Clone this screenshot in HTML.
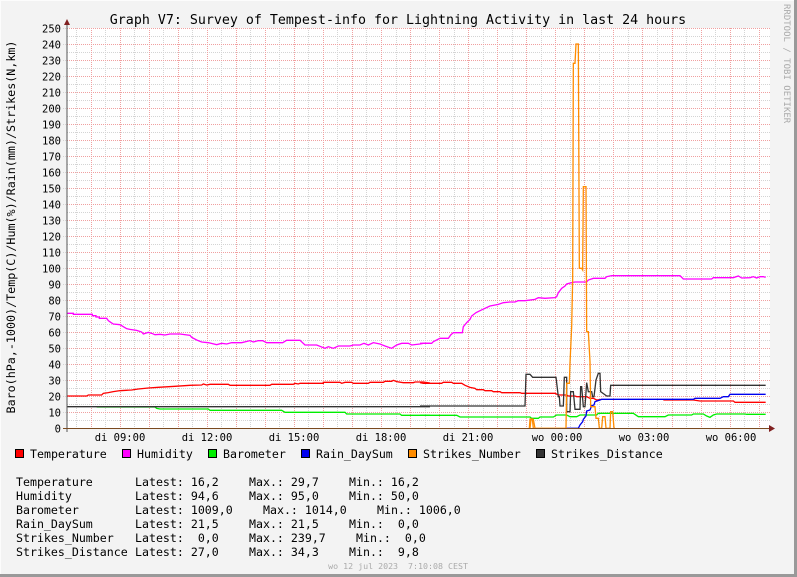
<!DOCTYPE html>
<html><head><meta charset="utf-8"><style>
html,body{margin:0;padding:0;background:#f3f3f3;}
svg{display:block;}
text{font-family:"DejaVu Sans Mono","Liberation Mono",monospace;white-space:pre;}
</style></head><body>
<svg width="797" height="577" viewBox="0 0 797 577" xmlns="http://www.w3.org/2000/svg">
<rect x="0" y="0" width="797" height="577" fill="#f3f3f3"/>
<line x1="0" y1="0.5" x2="797" y2="0.5" stroke="#fcfcfc"/>
<line x1="0.5" y1="0" x2="0.5" y2="577" stroke="#fcfcfc"/>
<line x1="795.5" y1="0" x2="795.5" y2="577" stroke="#999" stroke-width="3"/>
<line x1="0" y1="575.5" x2="797" y2="575.5" stroke="#999" stroke-width="3"/>
<rect x="67" y="28" width="703" height="400" fill="#ffffff"/>
<g id="grid" stroke-width="1" stroke-dasharray="1,1" fill="none">
<g stroke="#d4d4d4" id="minv"></g>
<g stroke="#d4d4d4" id="minh"></g>
<g stroke="#f0a0a0" id="majv"></g>
<g stroke="#f0a0a0" id="majh"></g>
</g>
<g id="ylab" font-size="10.5" fill="#000" text-anchor="end"></g>
<g id="xlab" font-size="10.5" fill="#000" text-anchor="middle">
<text x="120" y="441">di 09:00</text>
<text x="207" y="441">di 12:00</text>
<text x="294" y="441">di 15:00</text>
<text x="381" y="441">di 18:00</text>
<text x="468" y="441">di 21:00</text>
<text x="557" y="441">wo 00:00</text>
<text x="644" y="441">wo 03:00</text>
<text x="731" y="441">wo 06:00</text>
</g>
<text x="398" y="24" font-size="13.3" text-anchor="middle" fill="#000">Graph V7: Survey of Tempest-info for Lightning Activity in last 24 hours</text>
<text transform="translate(15,227) rotate(-90)" font-size="11.7" text-anchor="middle" fill="#000">Baro(hPa,-1000)/Temp(C)/Hum(%)/Rain(mm)/Strikes(N,km)</text>
<text transform="translate(784,4) rotate(90)" font-size="9" fill="#aaa">RRDTOOL / TOBI OETIKER</text>

<g transform="translate(60,300) scale(0.33333)" fill="none" stroke-width="1.3">
<polyline vector-effect="non-scaling-stroke" stroke="#ff00ff" points="20,40 40,40 40,43 97,43 97,47 108,47 108,51 118,51 118,55 140,55 145,62 152,67 160,72 180,74 190,80 200,86 210,88 230,91 245,96 250,102 265,97 275,100 285,104 300,103 315,105 330,102 360,102 390,106 395,112 410,120 425,126 445,128 470,134 485,130 500,132 515,128 545,128 570,122 580,126 595,122 608,122 620,128 635,128 668,128 680,121 720,121 735,135 770,135 795,145 805,140 820,145 835,138 870,138 880,135 900,135 912,130 925,135 940,128 960,132 975,138 995,145 1010,135 1025,130 1045,130 1055,135 1080,132 1090,130 1110,130"/>
<polyline vector-effect="non-scaling-stroke" stroke="#ff0000" points="20,288 80,288 85,285 125,285 130,280 145,278 160,275 180,272 215,270 235,267 265,264 295,262 345,259 390,256 425,255 430,252 440,255 450,253 505,253 510,256 630,256 635,253 700,253 705,250 715,252 720,250 790,250 790,247 840,247 845,250 855,247 875,247 880,250 925,250 930,247 970,247 975,244 995,244 1000,241 1010,245 1030,248 1060,248 1065,246 1090,246 1110,249"/>
<polyline vector-effect="non-scaling-stroke" stroke="#00ee00" points="110,321 285,321 290,325 300,327 445,327 450,331 665,331 675,337 855,337 860,342 1020,342 1025,346 1110,346"/>
<polyline vector-effect="non-scaling-stroke" stroke="#333" points="20,320 1110,320"/>
</g>
<g transform="translate(420,260) scale(0.33333)" fill="none" stroke-width="1.3">
<polyline vector-effect="non-scaling-stroke" stroke="#ff00ff" points="0,250 35,250 40,245 60,235 85,235 92,225 100,218 127,218 130,200 140,188 150,178 155,168 168,158 180,152 195,145 210,138 235,133 250,128 270,126 285,126 295,122 315,122 345,118 355,113 375,115 405,113 410,110 415,98 425,85 435,78 440,72 455,68 465,66 500,66 505,60 520,55 555,55 560,50 575,47 780,47 790,57 875,57 880,53 940,53 955,48 965,54 990,53 1000,50 1010,54 1020,50 1030,50 1037,52"/>
<polyline vector-effect="non-scaling-stroke" stroke="#ff0000" points="0,368 10,370 65,370 70,367 95,367 100,370 125,370 135,376 150,382 165,385 170,389 190,389 195,392 215,392 220,395 240,395 245,398 300,398 305,400 405,400 415,405 440,405 445,408 465,408 470,410 500,410 510,415 520,415 530,420 545,418"/>
<polyline vector-effect="non-scaling-stroke" stroke="#ff0000" points="730,420 820,420 840,423 940,423 945,427 1037,427"/>
<polyline vector-effect="non-scaling-stroke" stroke="#00ee00" points="0,466 110,466 120,471 330,471 335,475 355,475 360,471 400,471 410,465 440,465 450,470 470,470 480,465 530,465 535,460 640,460 655,470 735,470 745,465 815,465 820,462 850,462 860,468 870,472 880,465 890,462 975,462 980,463 1037,463"/>
<polyline vector-effect="non-scaling-stroke" stroke="#333" points="0,438 315,438 318,343 330,343 338,352 408,352 415,410 418,410 420,438 430,438 433,352 440,352 440,455 450,455 452,395 460,395 465,448 480,448 482,380 485,380 490,440 495,440 500,368 505,395 515,395 518,410 522,410 528,360 535,340 540,340 542,395 560,408 570,408 572,376 1037,376"/>
<polyline vector-effect="non-scaling-stroke" stroke="#0000ee" points="440,505 475,505 480,495 488,485 490,478 498,468 500,453 510,450 515,437 522,435 525,425 540,420 545,418 820,418 825,415 900,415 910,410 925,410 930,403 1037,403"/>
<polyline vector-effect="non-scaling-stroke" stroke="#ff8c00" points="328,505 330,477 337,477 340,505"/>
</g>
<g transform="translate(520,30) scale(0.33333)" fill="none" stroke-width="1.3">
<polyline vector-effect="non-scaling-stroke" stroke="#ff8c00" points="30,1195 33,1168 40,1168 45,1195 138,1195 140,1060 148,1060 150,1000 155,890 158,750 160,100 165,100 168,42 175,42 178,715 185,715 188,720 190,470 198,470 200,905 205,905 210,995 212,1130 225,1130 228,1165 235,1165 238,1195 245,1195 248,1160 255,1160 258,1195 270,1195 272,1145 278,1145 282,1195 285,1195"/>
</g>
<line x1="67" y1="22" x2="67" y2="432" stroke="#555" stroke-width="1"/>
<line x1="63" y1="428.5" x2="772" y2="428.5" stroke="#7a4a20" stroke-width="1"/>
<polygon points="64,25 70,25 67,19" fill="#802020"/>
<polygon points="769,425 769,432 775,428.5" fill="#802020"/>
<g font-size="11.6" fill="#000">
<rect x="15.5" y="449.5" width="8" height="8" fill="#ff0000" stroke="#000"/><text x="30" y="458">Temperature</text>
<rect x="122.5" y="449.5" width="8" height="8" fill="#ff00ff" stroke="#000"/><text x="137" y="458">Humidity</text>
<rect x="208.5" y="449.5" width="8" height="8" fill="#00ee00" stroke="#000"/><text x="223" y="458">Barometer</text>
<rect x="301.5" y="449.5" width="8" height="8" fill="#0000ee" stroke="#000"/><text x="316" y="458">Rain_DaySum</text>
<rect x="408.5" y="449.5" width="8" height="8" fill="#ff8c00" stroke="#000"/><text x="423" y="458">Strikes_Number</text>
<rect x="536.5" y="449.5" width="8" height="8" fill="#333" stroke="#000"/><text x="551" y="458">Strikes_Distance</text>
</g>
<g font-size="11.6" fill="#000">
<text x="16" y="486">Temperature</text><text x="135" y="486">Latest: 16,2</text><text x="249" y="486">Max.: 29,7</text><text x="349" y="486">Min.: 16,2</text>
<text x="16" y="500">Humidity</text><text x="135" y="500">Latest: 94,6</text><text x="249" y="500">Max.: 95,0</text><text x="349" y="500">Min.: 50,0</text>
<text x="16" y="514">Barometer</text><text x="135" y="514">Latest: 1009,0</text><text x="263" y="514">Max.: 1014,0</text><text x="377" y="514">Min.: 1006,0</text>
<text x="16" y="528">Rain_DaySum</text><text x="135" y="528">Latest: 21,5</text><text x="249" y="528">Max.: 21,5</text><text x="349" y="528">Min.:  0,0</text>
<text x="16" y="542">Strikes_Number</text><text x="135" y="542">Latest:  0,0</text><text x="249" y="542">Max.: 239,7</text><text x="356" y="542">Min.:  0,0</text>
<text x="16" y="556">Strikes_Distance</text><text x="135" y="556">Latest: 27,0</text><text x="249" y="556">Max.: 34,3</text><text x="349" y="556">Min.:  9,8</text>
</g>
<text x="468" y="569" font-size="8.3" fill="#aaa" text-anchor="end">wo 12 jul 2023  7:10:08 CEST</text>
<script>
(function(){
var ns="http://www.w3.org/2000/svg";
function L(g,x1,y1,x2,y2){var l=document.createElementNS(ns,"line");l.setAttribute("x1",x1);l.setAttribute("y1",y1);l.setAttribute("x2",x2);l.setAttribute("y2",y2);document.getElementById(g).appendChild(l);}
for(var v=0;v<=250;v+=5){var y=(428.5-1.6*v).toFixed(1);if(v%10==0){if(v>0)L("majh",67,y,770,y);var t=document.createElementNS(ns,"text");t.setAttribute("x",61);t.setAttribute("y",(+y+4).toFixed(1));t.textContent=v;document.getElementById("ylab").appendChild(t);L("minh",63,y,67,y);}else L("minh",67,y,770,y);}
var h0=90.5,hw=29.05;
for(var k=-1;k<50;k++){var x=h0+hw*k/2;if(x<68||x>769)continue;x=Math.round(x)+0.5;if(k%2==0)L("majv",x,28,x,428);else L("minv",x,28,x,428);}
})();
</script>
</svg>
</body></html>
